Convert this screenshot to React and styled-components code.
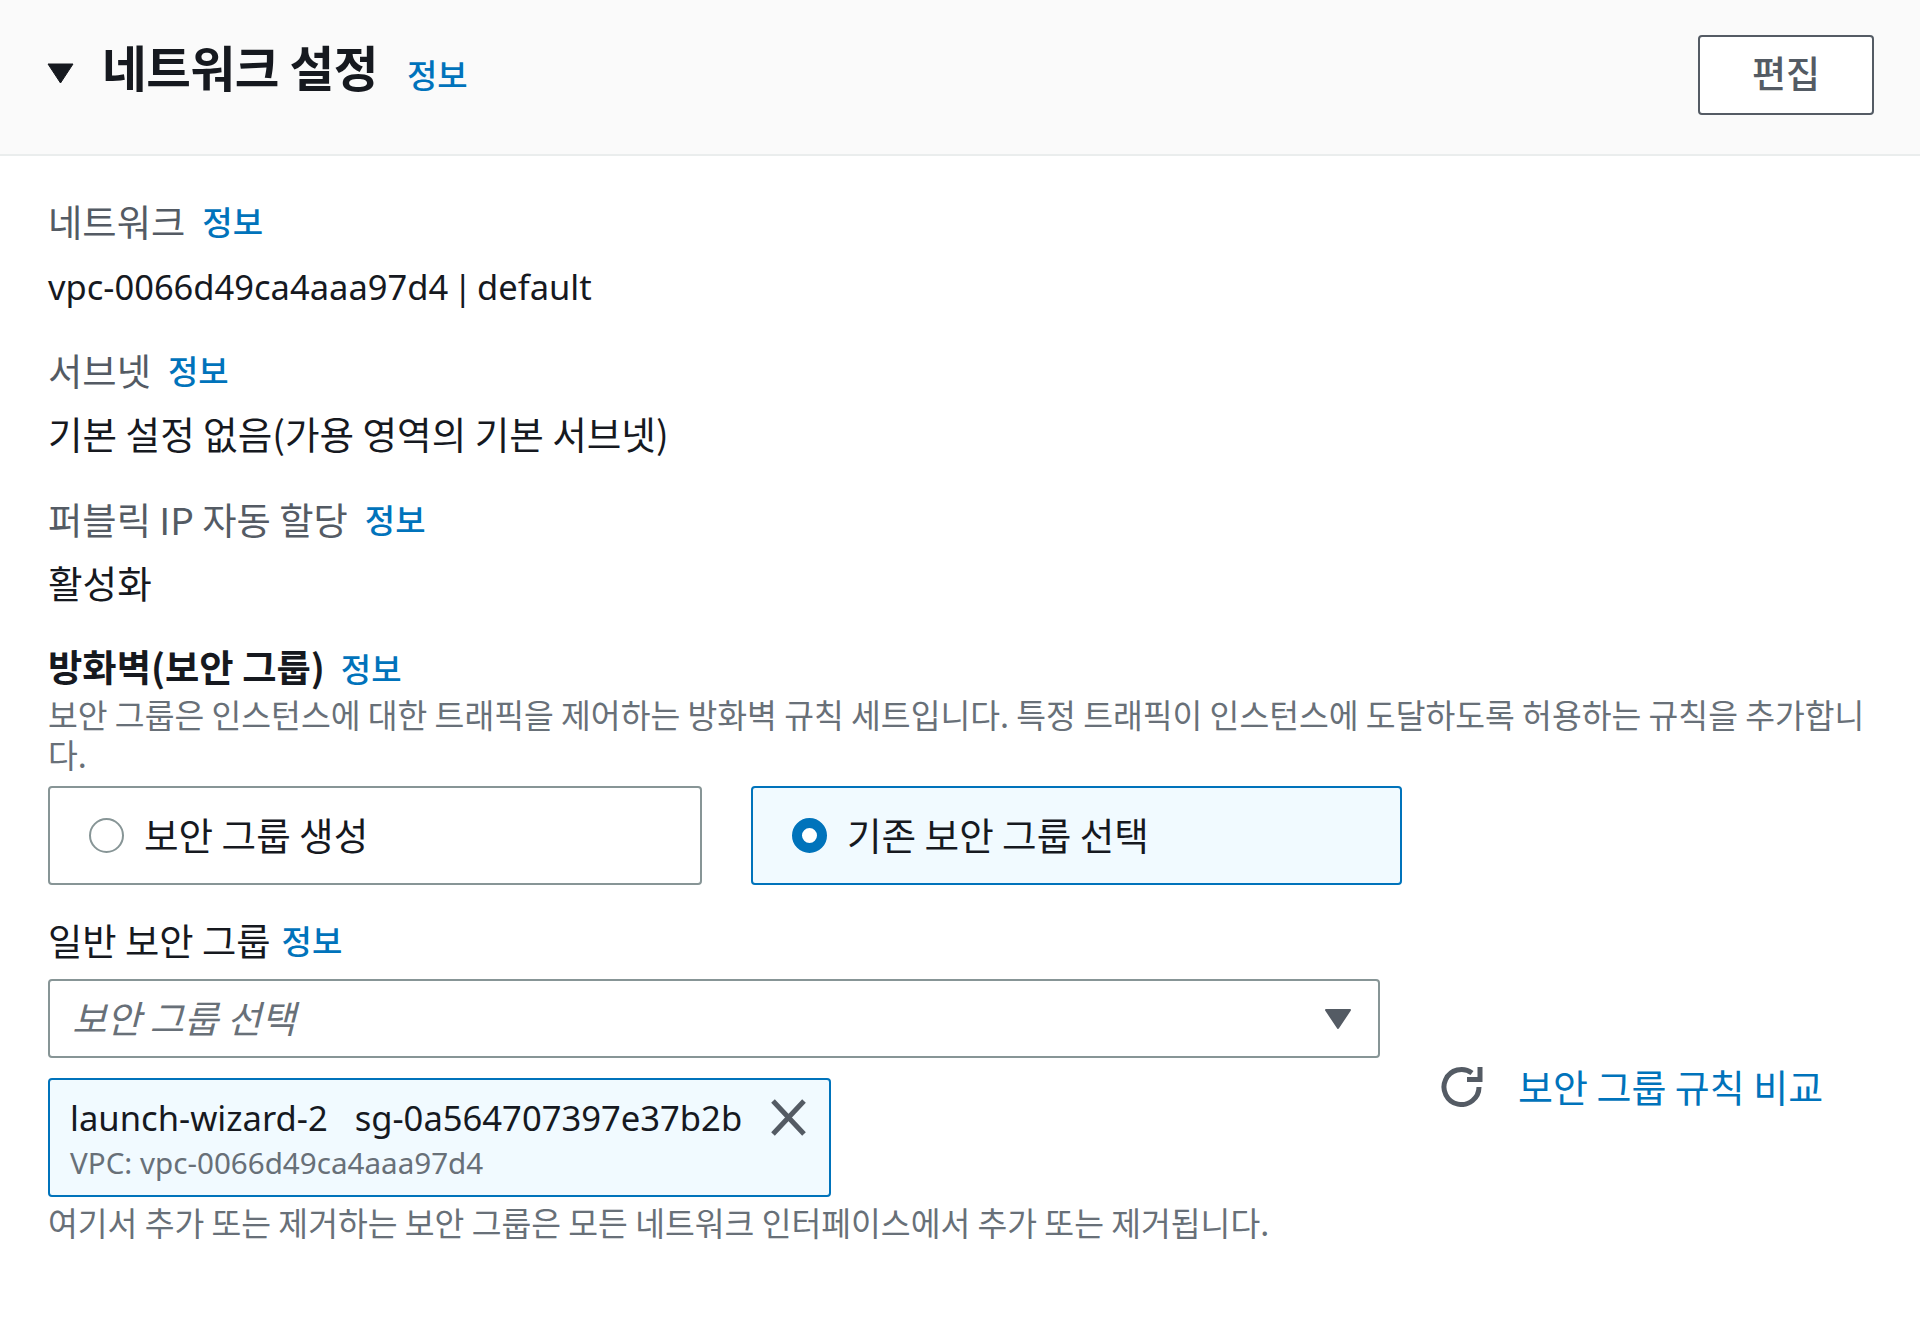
import React from "react";
import styled, { createGlobalStyle } from "styled-components";

const FONT = `"Noto Sans", "Noto Sans CJK KR", sans-serif`;
const KR = `"Noto Sans CJK KR", "Noto Sans", sans-serif`;

const Global = createGlobalStyle`
  html, body { margin: 0; padding: 0; background: #fff; }
  body { font-family: ${KR}; color: #16191f; width: 1920px; height: 1328px; overflow: hidden; }
`;

const Page = styled.div`
  width: 1920px;
  height: 1328px;
  display: flex;
  flex-direction: column;
`;

const Header = styled.header`
  height: 156px;
  box-sizing: border-box;
  background: #fafafa;
  border-bottom: 2px solid #eaeded;
  display: flex;
  align-items: center;
  padding: 0 47px;
`;

const TitleGroup = styled.div`
  display: flex;
  align-items: center;
  flex: 1;
  margin-top: -10px;
`;

const Caret = styled.svg`
  width: 27px;
  height: 21px;
  margin-right: 28px;
  margin-top: 2px;
`;

const Title = styled.h2`
  margin: 0 0 12px;
  font-size: 48.5px;
  line-height: 56px;
  font-weight: 700;
  letter-spacing: -0.4px;
  color: #16191f;
`;

const Info = styled.a`
  font-size: 33px;
  line-height: 40px;
  font-weight: 500;
  color: #0073bb;
  margin-left: ${(p) => p.$gap ?? 17}px;
`;

const TitleInfo = styled(Info)`
  margin-left: 29px;
  margin-top: 4px;
`;

const EditButton = styled.button`
  width: 176px;
  height: 80px;
  margin: -4px -1px 0 0;
  padding: 0 0 6px;
  background: #fff;
  border: 2px solid #545b64;
  border-radius: 4px;
  font-family: ${KR};
  font-size: 37px;
  font-weight: 500;
  color: #545b64;
`;

const Body = styled.main`
  padding: 43px 47px 0 48px;
  display: flex;
  flex-direction: column;
`;

const Field = styled.section`
  display: flex;
  flex-direction: column;
  margin-bottom: 39px;
`;

const LabelRow = styled.div`
  display: flex;
  align-items: center;
  height: 44px;
`;

const Label = styled.span`
  font-size: 37.3px;
  line-height: 44px;
  color: #545b64;
`;

const Value = styled.div`
  font-family: ${(p) => (p.$latin ? FONT : KR)};
  font-size: ${(p) => (p.$latin ? 34.5 : 37.6)}px;
  word-spacing: ${(p) => (p.$latin ? -4 : 0)}px;
  line-height: 44px;
  margin-top: ${(p) => (p.$latin ? 22 : 19)}px;
  margin-bottom: ${(p) => (p.$latin ? 0 : 3)}px;
  color: #16191f;
`;

const StrongLabel = styled.span`
  font-size: 37.3px;
  line-height: 44px;
  font-weight: 700;
  padding-bottom: 4px;
  color: #16191f;
`;

const Description = styled.p`
  margin: 4px 0 0;
  font-size: 32.4px;
  line-height: 40px;
  color: #687078;
  width: 1825px;
`;

const Tiles = styled.div`
  display: flex;
  gap: 49px;
  margin-top: 12px;
`;

const Tile = styled.label`
  width: ${(p) => (p.$w ? p.$w : 654)}px;
  height: 99px;
  box-sizing: border-box;
  border: 2px solid ${(p) => (p.$on ? "#0073bb" : "#879596")};
  background: ${(p) => (p.$on ? "#f1faff" : "#fff")};
  border-radius: 4px;
  display: flex;
  align-items: center;
  padding-left: 39px;
  gap: 20px;
  font-size: 37.6px;
  color: #16191f;
  & > span:last-child {
    padding-bottom: 5px;
  }
`;

const Radio = styled.span`
  width: 35px;
  height: 35px;
  box-sizing: border-box;
  border-radius: 50%;
  border: ${(p) => (p.$on ? "10px solid #0073bb" : "2px solid #879596")};
  background: #fff;
  flex: none;
`;

const SubLabelRow = styled(LabelRow)`
  margin-top: 33px;
`;

const SubLabel = styled.span`
  font-size: 37.3px;
  line-height: 44px;
  color: #16191f;
`;

const SelectGrid = styled.div`
  display: grid;
  grid-template-columns: 1332px auto;
  column-gap: 61px;
  margin-top: 17px;
`;

const SelectCol = styled.div`
  display: flex;
  flex-direction: column;
`;

const Select = styled.div`
  height: 79px;
  box-sizing: border-box;
  border: 2px solid #879596;
  border-radius: 4px;
  display: flex;
  align-items: center;
  justify-content: space-between;
  padding: 0 26px 0 22px;
`;

const Placeholder = styled.span`
  font-size: 37.5px;
  font-style: italic;
  color: #687078;
  padding-bottom: 5px;
`;

const Token = styled.div`
  margin-top: 20px;
  width: 783px;
  height: 119px;
  box-sizing: border-box;
  border: 2px solid #0073bb;
  border-radius: 4px;
  background: #f1faff;
  padding: 16px 20px 0;
  position: relative;
`;

const TokenName = styled.div`
  font-family: ${FONT};
  font-size: 34.6px;
  line-height: 44px;
  color: #16191f;
  word-spacing: 0;
  white-space: pre;
`;

const TokenVpc = styled.div`
  font-family: ${FONT};
  font-size: 29.6px;
  line-height: 40px;
  margin-top: 3px;
  color: #687078;
`;

const Dismiss = styled.svg`
  position: absolute;
  right: 22px;
  top: 19px;
  width: 37px;
  height: 37px;
`;

const Hint = styled.p`
  margin: 5px 0 0;
  font-size: 32.4px;
  line-height: 40px;
  color: #687078;
`;

const Compare = styled.div`
  display: flex;
  align-items: center;
  gap: 35px;
  margin-top: 67px;
  height: 80px;
`;

const CompareLink = styled.a`
  font-size: 38px;
  line-height: 44px;
  color: #0073bb;
`;

export default function App() {
  return (
    <Page>
      <Global />
      <Header>
        <TitleGroup>
          <Caret viewBox="0 0 27 21"><path d="M1 1h25L13.5 20z" fill="#16191f" stroke="#16191f" strokeLinejoin="round" /></Caret>
          <Title>네트워크 설정</Title>
          <TitleInfo>정보</TitleInfo>
        </TitleGroup>
        <EditButton>편집</EditButton>
      </Header>
      <Body>
        <Field>
          <LabelRow><Label>네트워크</Label><Info>정보</Info></LabelRow>
          <Value $latin>vpc-0066d49ca4aaa97d4 | default</Value>
        </Field>
        <Field>
          <LabelRow><Label>서브넷</Label><Info>정보</Info></LabelRow>
          <Value>기본 설정 없음(가용 영역의 기본 서브넷)</Value>
        </Field>
        <Field>
          <LabelRow><Label>퍼블릭 IP 자동 할당</Label><Info>정보</Info></LabelRow>
          <Value>활성화</Value>
        </Field>
        <section>
          <LabelRow><StrongLabel>방화벽(보안 그룹)</StrongLabel><Info $gap={16}>정보</Info></LabelRow>
          <Description>보안 그룹은 인스턴스에 대한 트래픽을 제어하는 방화벽 규칙 세트입니다. 특정 트래픽이 인스턴스에 도달하도록 허용하는 규칙을 추가합니다.</Description>
          <Tiles>
            <Tile><Radio /><span>보안 그룹 생성</span></Tile>
            <Tile $on $w={651}><Radio $on /><span>기존 보안 그룹 선택</span></Tile>
          </Tiles>
          <SubLabelRow><SubLabel>일반 보안 그룹</SubLabel><Info $gap={11}>정보</Info></SubLabelRow>
          <SelectGrid>
            <SelectCol>
              <Select>
                <Placeholder>보안 그룹 선택</Placeholder>
                <svg width="28" height="22" viewBox="0 0 28 22"><path d="M2 2h24L14 20z" fill="#545b64" stroke="#545b64" strokeWidth="2" strokeLinejoin="round" /></svg>
              </Select>
              <Token>
                <TokenName>launch-wizard-2   sg-0a564707397e37b2b</TokenName>
                <TokenVpc>VPC: vpc-0066d49ca4aaa97d4</TokenVpc>
                <Dismiss viewBox="0 0 37 37"><path d="M3 2l31 33M34 2L3 35" stroke="#545b64" strokeWidth="5" fill="none" /></Dismiss>
              </Token>
            </SelectCol>
            <Compare>
              <svg width="42" height="42" viewBox="0 0 42 42" fill="none" stroke="#545b64" strokeWidth="5"><path d="M38 22a17.5 17.5 0 1 1-7-14" /><path d="M26 14.500h13V2" strokeLinejoin="miter" /></svg>
              <CompareLink>보안 그룹 규칙 비교</CompareLink>
            </Compare>
          </SelectGrid>
          <Hint>여기서 추가 또는 제거하는 보안 그룹은 모든 네트워크 인터페이스에서 추가 또는 제거됩니다.</Hint>
        </section>
      </Body>
    </Page>
  );
}
